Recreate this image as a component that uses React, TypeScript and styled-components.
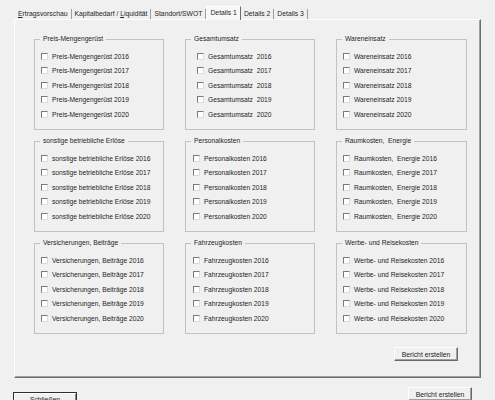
import styled, {createGlobalStyle} from 'styled-components';

const GlobalStyle = createGlobalStyle`
  html, body {
    margin: 0;
    padding: 0;
    background: #f0f0f0;
  }
`;

type Group = {
  title: string;
  label: string;
  pad: number;
};

const groups: Group[] = [
  {title: 'Preis-Mengengerüst', label: 'Preis-Mengengerüst', pad: 6},
  {title: 'Gesamtumsatz', label: 'Gesamtumsatz\u00a0 ', pad: 11},
  {title: 'Wareneinsatz', label: 'Wareneinsatz', pad: 6},
  {title: 'sonstige betriebliche Erlöse', label: 'sonstige betriebliche Erlöse', pad: 6},
  {title: 'Personalkosten', label: 'Personalkosten', pad: 7},
  {title: 'Raumkosten,\u00a0 Energie', label: 'Raumkosten,\u00a0 Energie', pad: 6},
  {title: 'Versicherungen, Beiträge', label: 'Versicherungen, Beiträge', pad: 6},
  {title: 'Fahrzeugkosten', label: 'Fahrzeugkosten', pad: 7},
  {title: 'Werbe- und Reisekosten', label: 'Werbe- und Reisekosten', pad: 6},
];

const years = [2016, 2017, 2018, 2019, 2020];

const App = () => {
  return (
    <Window>
      <GlobalStyle />
      <TabStrip>
        <Tab><u>E</u>rtragsvorschau</Tab>
        <Tab>Kapitalbedarf / <u>L</u>iquidität</Tab>
        <Tab>Standort/SWOT</Tab>
        <Tab $active>Details 1</Tab>
        <Tab>Details 2</Tab>
        <Tab>Details 3</Tab>
      </TabStrip>
      <Panel>
        <Grid>
          {groups.map((g) => (
            <GroupBox key={g.title}>
              <Legend>{g.title}</Legend>
              <ItemList $pad={g.pad}>
                {years.map((y) => (
                  <Item key={y}>
                    <Check />
                    <span>{g.label.endsWith(' ') ? g.label + y : `${g.label} ${y}`}</span>
                  </Item>
                ))}
              </ItemList>
            </GroupBox>
          ))}
        </Grid>
        <PanelActions>
          <Button>Bericht erstellen</Button>
        </PanelActions>
      </Panel>
      <Footer>
        <Button $top={14} $default>Schließen</Button>
        <Button $top={9}>Bericht erstellen</Button>
      </Footer>
    </Window>
  );
};

export default App;

const Window = styled.div`
  width: 495px;
  height: 400px;
  overflow: hidden;
  background: #f0f0f0;
  font-family: "Liberation Sans", Arial, sans-serif;
  font-size: 6.7px;
  color: #1e1e1e;
`;

const TabStrip = styled.div`
  display: flex;
  align-items: flex-end;
  height: 19px;
  padding-left: 15px;
  position: relative;
  z-index: 1;
`;

const Tab = styled.div<{$active?: boolean}>`
  box-sizing: border-box;
  height: ${(p) => (p.$active ? '14px' : '10px')};
  line-height: ${(p) => (p.$active ? '12px' : '10px')};
  padding: 0 3px;
  white-space: nowrap;
  font-size: 6.8px;
  margin-bottom: ${(p) => (p.$active ? '-1px' : '0')};
  background: ${(p) => (p.$active ? '#f7f7f7' : 'transparent')};
  border-top: ${(p) => (p.$active ? '1px solid #ffffff' : 'none')};
  border-left: ${(p) => (p.$active ? '1px solid #ffffff' : 'none')};
  border-right: 1px solid ${(p) => (p.$active ? '#6e6e6e' : '#9c9c9c')};

  u {
    text-decoration-thickness: 1px;
  }
`;

const Panel = styled.div`
  box-sizing: border-box;
  margin-left: 14px;
  width: 467px;
  height: 359px;
  padding: 15px 13px 0 19px;
  border: 1px solid;
  border-color: #ffffff #6e6e6e #6e6e6e #ffffff;
  box-shadow: inset -1px -1px 0 #a0a0a0;
`;

const Grid = styled.div`
  display: grid;
  grid-template-columns: 130px 130px 131px;
  grid-auto-rows: 95px;
  column-gap: 21px;
  row-gap: 7px;
`;

const GroupBox = styled.fieldset`
  box-sizing: border-box;
  height: 95px;
  margin: 0;
  min-width: 0;
  padding: 6px 0 0 0;
  border: 1px solid #c2c2c2;
`;

const Legend = styled.legend`
  margin-left: 5px;
  padding: 0 3px;
  line-height: 8px;
  font-size: 6.7px;
  white-space: nowrap;
`;

const ItemList = styled.div<{$pad: number}>`
  display: flex;
  flex-direction: column;
  padding-left: ${(p) => p.$pad}px;
`;

const Item = styled.div`
  display: flex;
  align-items: center;
  gap: 4px;
  height: 14.5px;
  white-space: nowrap;
`;

const Check = styled.span`
  box-sizing: border-box;
  width: 7px;
  height: 7px;
  flex: none;
  background: #ffffff;
  border: 1px solid;
  border-color: #7a7a7a #dcdcdc #dcdcdc #7a7a7a;
`;

const PanelActions = styled.div`
  display: flex;
  justify-content: flex-end;
  margin-top: 13px;
  padding-right: 9px;
`;

const Footer = styled.div`
  display: flex;
  justify-content: space-between;
  align-items: flex-start;
  padding: 0 23px 0 13px;
`;

const Button = styled.div<{$top?: number; $default?: boolean}>`
  box-sizing: border-box;
  width: 64px;
  height: 14px;
  margin-top: ${(p) => p.$top ?? 0}px;
  display: flex;
  align-items: center;
  justify-content: center;
  font-size: 6.8px;
  background: #f0f0f0;
  white-space: nowrap;
  border: 1px solid;
  border-color: ${(p) => (p.$default ? '#2e2e2e' : '#ffffff #6a6a6a #6a6a6a #ffffff')};
  box-shadow: ${(p) =>
    p.$default
      ? 'inset 1px 1px 0 #ffffff, inset -1px -1px 0 #8a8a8a'
      : 'inset -1px -1px 0 #a0a0a0'};
`;
